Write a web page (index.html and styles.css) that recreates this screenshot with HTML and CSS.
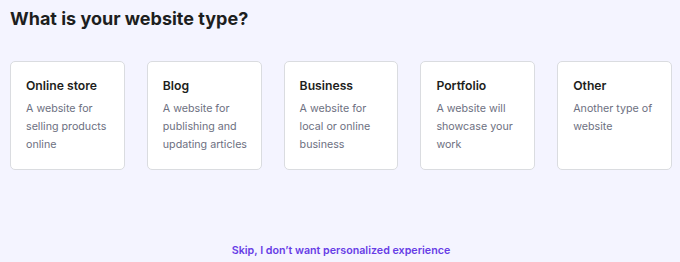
FILE: index.html
```html
<!DOCTYPE html>
<html>
<head>
<meta charset="utf-8">
<link rel="stylesheet" href="styles.css">
</head>
<body>
<div class="page">
  <h1 class="title">What is your website type?</h1>
  <div class="cards">
    <div class="card"><div class="card-title">Online store</div><div class="card-desc">A website for selling products online</div></div>
    <div class="card"><div class="card-title">Blog</div><div class="card-desc">A website for publishing and updating articles</div></div>
    <div class="card"><div class="card-title">Business</div><div class="card-desc">A website for local or online business</div></div>
    <div class="card"><div class="card-title">Portfolio</div><div class="card-desc">A website will showcase your work</div></div>
    <div class="card"><div class="card-title">Other</div><div class="card-desc">Another type of website</div></div>
  </div>
  <div class="skip"><a class="skip-link" href="#">Skip, I don’t want personalized experience</a></div>
</div>
</body>
</html>
```
FILE: styles.css
```css
html, body {
  margin: 0;
  padding: 0;
  background: #f4f4ff;
}
body {
  font-family: "Inter", "DejaVu Sans", sans-serif;
  color: #2f1c6a;
}
.page {
  width: 680px;
  height: 262px;
  box-sizing: border-box;
  padding: 6px 8px 0 10px;
  display: flex;
  flex-direction: column;
}
.title {
  margin: 0;
  font-size: 18px;
  line-height: 26px;
  font-weight: 700;
  color: #1d1e20;
}
.cards {
  margin-top: 29px;
  display: flex;
  gap: 22px;
}
.card {
  width: 115px;
  height: 109px;
  box-sizing: border-box;
  background: #ffffff;
  border: 1px solid #dadce0;
  border-radius: 5px;
  padding: 15px 8px 0 15px;
}
.card-title {
  font-size: 12.2px;
  line-height: 18px;
  font-weight: 600;
  color: #1d1e20;
}
.card-desc {
  margin-top: 5px;
  font-size: 10.7px;
  line-height: 18px;
  color: #6d7081;
}
.skip {
  margin-top: auto;
  height: 20px;
  display: flex;
  justify-content: center;
}
.skip-link {
  font-size: 10.7px;
  font-weight: 600;
  color: #673de6;
  text-decoration: none;
  line-height: 18px;
}
```
